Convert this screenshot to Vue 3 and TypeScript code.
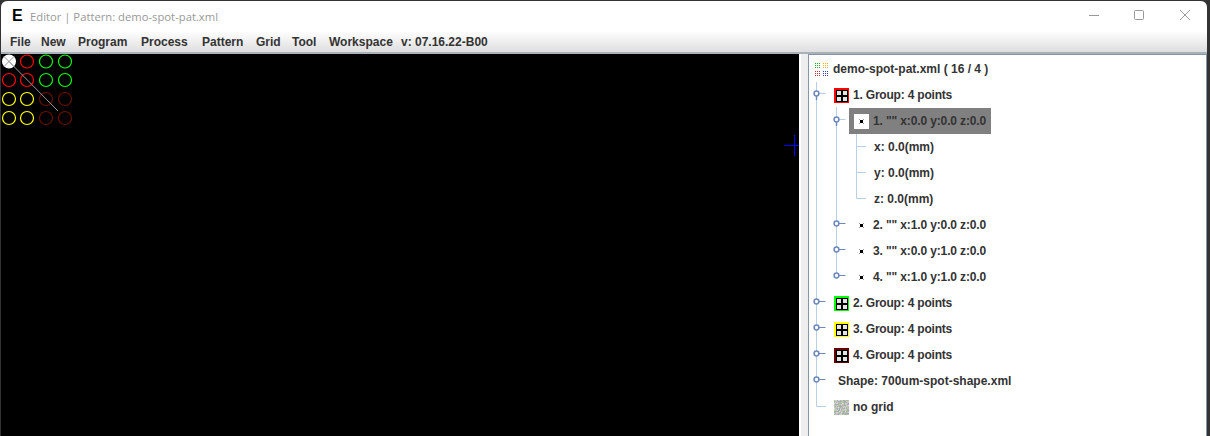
<script setup lang="ts">
import { computed } from 'vue';

type TreeRow = {
  level: number;
  label: string;
  icon?: 'group' | 'point' | 'root' | 'noise';
  color?: string;
  selected?: boolean;
};

const menus = ['File', 'New', 'Program', 'Process', 'Pattern', 'Grid', 'Tool', 'Workspace'];

const rows: TreeRow[] = [
  { level: 0, label: 'demo-spot-pat.xml ( 16 / 4 )', icon: 'root' },
  { level: 1, label: '1. Group: 4 points', icon: 'group', color: '#ff0000' },
  { level: 2, label: '1. "" x:0.0 y:0.0 z:0.0', icon: 'point', selected: true },
  { level: 3, label: 'x: 0.0(mm)' },
  { level: 3, label: 'y: 0.0(mm)' },
  { level: 3, label: 'z: 0.0(mm)' },
  { level: 2, label: '2. "" x:1.0 y:0.0 z:0.0', icon: 'point' },
  { level: 2, label: '3. "" x:0.0 y:1.0 z:0.0', icon: 'point' },
  { level: 2, label: '4. "" x:1.0 y:1.0 z:0.0', icon: 'point' },
  { level: 1, label: '2. Group: 4 points', icon: 'group', color: '#00ff00' },
  { level: 1, label: '3. Group: 4 points', icon: 'group', color: '#ffff00' },
  { level: 1, label: '4. Group: 4 points', icon: 'group', color: '#660000' },
  { level: 1, label: 'Shape: 700um-spot-shape.xml' },
  { level: 1, label: 'no grid', icon: 'noise' },
];

// spots on the canvas, row by row
const spotX = [9, 27, 46, 65];
const spotY = [61.5, 80, 99, 118];
const spotColors = [
  ['none', '#ff0000', '#00ff00', '#00ff00'],
  ['#ff0000', '#ff0000', '#00ff00', '#00ff00'],
  ['#ffff00', '#ffff00', '#661100', '#661100'],
  ['#ffff00', '#ffff00', '#661100', '#661100'],
];

const spots = computed(() =>
  spotY.flatMap((cy, r) => spotX.map((cx, c) => ({ cx, cy, color: spotColors[r][c] }))),
);

const rootDots = computed(() => {
  const quads = [
    { x: 0, y: 1, color: '#2e9e2e' },
    { x: 8, y: 1, color: '#f0b020' },
    { x: 0, y: 9, color: '#d03030' },
    { x: 8, y: 9, color: '#3040c0' },
  ];
  return quads.flatMap((q) =>
    [0, 2, 4].flatMap((dx) => [0, 2, 4].map((dy) => ({ x: q.x + dx, y: q.y + dy, color: q.color }))),
  );
});

const noiseDots = computed(() => {
  const colors = ['#9fb09f', '#d0c0d0', '#b0c8b0', '#c8c8b0', '#a8a8c0', '#d8d8d8', '#a8b8a0'];
  const out: { x: number; y: number; color: string }[] = [];
  let seed = 7;
  for (let y = 0; y < 15; y++) {
    for (let x = 0; x < 15; x++) {
      seed = (seed * 137 + 59) % 1009;
      out.push({ x, y, color: colors[seed % colors.length] });
    }
  }
  return out;
});

const handles = [
  { x: 816.5, y: 94, open: true },
  { x: 836.5, y: 120, open: true },
  { x: 836.5, y: 224, open: false },
  { x: 836.5, y: 250, open: false },
  { x: 836.5, y: 276, open: false },
  { x: 816.5, y: 302, open: false },
  { x: 816.5, y: 328, open: false },
  { x: 816.5, y: 354, open: false },
  { x: 816.5, y: 380, open: false },
];
</script>

<template>
  <div class="window">
    <header class="titlebar">
      <span class="app-mark">E</span>
      <span class="title">Editor | Pattern: demo-spot-pat.xml</span>
      <div class="window-buttons">
        <svg width="10" height="10" viewBox="0 0 10 10"><path d="M0 5.5h10" stroke="#999" fill="none" /></svg>
        <svg width="10" height="10" viewBox="0 0 10 10"><rect x="0.5" y="0.5" width="9" height="9" rx="1" stroke="#999" fill="none" /></svg>
        <svg class="close" width="10" height="10" viewBox="0 0 10 10"><path d="M0 0l10 10M10 0L0 10" stroke="#999" fill="none" /></svg>
      </div>
    </header>

    <nav class="menubar">
      <span v-for="m in menus" :key="m">{{ m }}</span>
      <span>v: 07.16.22-B00</span>
    </nav>

    <main class="content">
      <div class="canvas">
        <svg class="drawing" width="798" height="382">
          <g transform="translate(-1 -54)">
            <circle cx="9" cy="61.5" r="7" fill="#fff" />
            <circle
              v-for="(s, i) in spots"
              :key="i"
              :cx="s.cx"
              :cy="s.cy"
              r="6.5"
              :stroke="s.color"
              stroke-width="1.2"
              fill="none"
            />
            <path d="M4 56.5l10 10M14 56.5l-10 10" stroke="#999" fill="none" />
            <path d="M9 61.5L58 111" stroke="#999" fill="none" />
            <path d="M784 145.5h15M794.5 135v21" stroke="#0000ff" fill="none" />
          </g>
        </svg>
      </div>

      <div class="splitter"></div>

      <section class="tree">
        <svg class="guides" width="80" height="382">
          <g transform="translate(-808 -54)" fill="none">
            <path d="M816.5 82V406.5H826" stroke="#b8cfe6" />
            <path d="M836.5 107V276" stroke="#b8cfe6" />
            <path d="M856.5 133V198.5H866M856.5 146.5H866M856.5 172.5H866" stroke="#b8cfe6" />
            <g v-for="h in handles" :key="h.y">
              <path :d="`M${h.x} ${h.y - 0.5}h9`" :stroke="h.open ? '#b8cfe6' : '#6c88bc'" />
              <path v-if="h.open" :d="`M${h.x} ${h.y}v6`" stroke="#6c88bc" stroke-width="1.4" />
              <circle :cx="h.x" :cy="h.y - 0.5" r="2.4" stroke="#6c88bc" stroke-width="1.5" fill="#fff" />
            </g>
          </g>
        </svg>

        <div
          v-for="(row, i) in rows"
          :key="i"
          class="row"
          :class="[`level-${row.level}`, row.icon ? `has-${row.icon}` : 'no-icon']"
        >
          <div class="node" :class="{ selected: row.selected }">
            <svg v-if="row.icon === 'root'" class="icon root-icon" width="15" height="15">
              <rect v-for="(d, n) in rootDots" :key="n" :x="d.x" :y="d.y" width="1" height="1" :fill="d.color" />
            </svg>

            <svg v-else-if="row.icon === 'group'" class="icon" width="15" height="15">
              <rect width="15" height="15" :fill="row.color" />
              <rect x="2" y="2" width="12" height="12" fill="#000" />
              <rect x="3" y="3" width="4" height="4" fill="#e4e4e4" />
              <rect x="9" y="3" width="4" height="4" fill="#e4e4e4" />
              <rect x="3" y="9" width="4" height="4" fill="#e4e4e4" />
              <rect x="9" y="9" width="4" height="4" fill="#e4e4e4" />
            </svg>

            <svg v-else-if="row.icon === 'point'" class="icon" width="15" height="15">
              <rect v-if="row.selected" width="15" height="15" fill="#fff" />
              <rect x="6" y="6" width="3" height="3" fill="#000" />
              <path d="M5 5l1 1M10 5L9 6M5 10l1-1M10 10L9 9" stroke="#999" fill="none" />
            </svg>

            <svg v-else-if="row.icon === 'noise'" class="icon" width="15" height="15">
              <rect v-for="(d, n) in noiseDots" :key="n" :x="d.x" :y="d.y" width="1" height="1" :fill="d.color" />
            </svg>

            <span class="label">{{ row.label }}</span>
          </div>
        </div>
      </section>
    </main>
  </div>
</template>

<style scoped>
.window {
  width: 1206px;
  height: 436px;
  margin-left: 1px;
  display: flex;
  flex-direction: column;
  background: #fff;
  margin-top: 1px;
  border-top-left-radius: 6px;
  border-top-right-radius: 6px;
  overflow: hidden;
  font-family: "Liberation Sans", Arial, sans-serif;
}

.titlebar {
  height: 30px;
  display: flex;
  align-items: center;
  flex: none;
  padding-left: 11px;
}

.app-mark {
  width: 18px;
  font-weight: 700;
  font-size: 16px;
  color: #000;
}

.title {
  font-family: "Open Sans", "Noto Sans", sans-serif;
  font-size: 11.25px;
  color: #999;
}

.window-buttons {
  margin-left: auto;
  display: flex;
  gap: 35px;
  padding-right: 17px;
  margin-bottom: 2px;
}

.close {
  margin-left: 1px;
}

.menubar {
  height: 23px;
  flex: none;
  display: grid;
  grid-template-columns: 31px 37px 63px 61px 54px 36px 37px 72px auto;
  justify-content: start;
  align-items: center;
  padding-left: 9px;
  box-sizing: border-box;
  border-bottom: 2px solid #a8b0b8;
  background: linear-gradient(#ffffff, #dedede);
  font-weight: 700;
  font-size: 12px;
  color: #333;
}

.content {
  flex: 1;
  display: flex;
  min-height: 0;
}

.canvas {
  width: 798px;
  flex: none;
  background: #000;
}

.drawing {
  display: block;
}

.splitter {
  width: 9px;
  flex: none;
  box-sizing: border-box;
  border-left: 2px solid #fff;
  background: #eeeeee;
}

.tree {
  position: relative;
  flex: 1;
  border: 1px solid #8496a8;
  border-bottom: 0;
  padding-top: 1px;
  font-weight: 700;
  font-size: 12px;
  color: #333;
}

.guides {
  position: absolute;
  left: -1px;
  top: -1px;
}

.row {
  height: 26px;
  display: flex;
  align-items: center;
}

.node {
  position: relative;
  height: 26px;
  display: flex;
  align-items: center;
  gap: 4px;
  padding-right: 5px;
}

.node.selected {
  background: #808080;
  padding-left: 5px;
  margin-left: -5px;
}

.icon {
  display: block;
  flex: none;
}

.level-0 {
  padding-left: 6px;
}

.root-icon {
  margin-right: -1px;
}

.level-1 {
  padding-left: 25px;
}

.level-2 {
  padding-left: 45px;
}

.level-3 {
  padding-left: 65px;
}

.level-1.no-icon {
  padding-left: 29px;
}

.has-group .label {
  letter-spacing: -0.2px;
}

.has-point .label {
  letter-spacing: -0.13px;
}
</style>

<style>
body {
  background: #333;
}
</style>
